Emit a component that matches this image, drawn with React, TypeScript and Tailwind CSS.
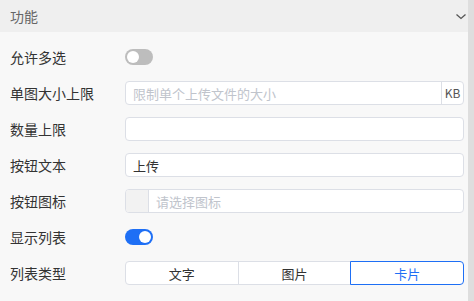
import React, { useState } from 'react';

const font = { fontFamily: '"Noto Sans CJK SC", "Noto Sans", sans-serif' };

const Toggle: React.FC<{ on: boolean; onChange: () => void }> = ({ on, onChange }) => (
  <button
    type="button"
    onClick={onChange}
    className={`relative h-[16px] w-[28px] rounded-full ${on ? 'bg-[#1e6ff5]' : 'bg-[#bdbdbd]'}`}
  >
    <span
      className={`absolute top-[2px] h-[12px] w-[12px] rounded-full bg-white ${on ? 'left-[14px]' : 'left-[2px]'}`}
    />
  </button>
);

const Row: React.FC<{ label: string; children: React.ReactNode }> = ({ label, children }) => (
  <div className="flex h-9 items-center">
    <div className="w-[115px] shrink-0 text-[14px] leading-none text-[#333]">{label}</div>
    <div className="flex flex-1 items-center">{children}</div>
  </div>
);

const App: React.FC = () => {
  const [multi, setMulti] = useState(false);
  const [showList, setShowList] = useState(true);
  const [listType, setListType] = useState('卡片');
  const [btnText, setBtnText] = useState('上传');

  const inputCls =
    'h-[24px] w-full rounded-[4px] border border-[#dcdfe6] bg-white px-[7px] text-[13px] text-[#333] outline-none placeholder:text-[#c0c4cc]';

  return (
    <div className="flex h-[301px] w-[474px] bg-[#f8f8f8]" style={font}>
      <div className="flex-1">
        <div className="flex h-8 items-center justify-between bg-[#efefef] pl-[10px] pr-[1px]">
          <span className="text-[14px] text-[#666]">功能</span>
          <svg width="12" height="12" viewBox="0 0 12 12" fill="none">
            <path d="M1.5 4.5l4.5 4 4.5-4" stroke="#555" strokeWidth="1.3" />
          </svg>
        </div>
        <div className="pl-[10px] pr-[4px] pt-[7px]">
          <Row label="允许多选">
            <Toggle on={multi} onChange={() => setMulti(!multi)} />
          </Row>
          <Row label="单图大小上限">
            <div className="flex h-[24px] w-full rounded-[4px] border border-[#dcdfe6] bg-white">
              <input
                className="h-full flex-1 bg-transparent px-[7px] text-[13px] outline-none placeholder:text-[#c0c4cc]"
                placeholder="限制单个上传文件的大小"
              />
              <span className="flex w-[22px] items-center justify-center border-l border-[#dcdfe6] text-[12px] text-[#555]">
                KB
              </span>
            </div>
          </Row>
          <Row label="数量上限">
            <input className={inputCls} />
          </Row>
          <Row label="按钮文本">
            <input className={inputCls} value={btnText} onChange={(e) => setBtnText(e.target.value)} />
          </Row>
          <Row label="按钮图标">
            <div className="flex h-[24px] w-full overflow-hidden rounded-[4px] border border-[#dcdfe6] bg-white">
              <span className="w-[23px] border-r border-[#dcdfe6] bg-[#f2f2f2]" />
              <input
                className="h-full flex-1 bg-transparent px-[7px] text-[13px] outline-none placeholder:text-[#c0c4cc]"
                placeholder="请选择图标"
              />
            </div>
          </Row>
          <Row label="显示列表">
            <Toggle on={showList} onChange={() => setShowList(!showList)} />
          </Row>
          <Row label="列表类型">
            <div className="flex h-[24px] w-full">
              {['文字', '图片', '卡片'].map((t, i) => {
                const active = listType === t;
                return (
                  <button
                    key={t}
                    type="button"
                    onClick={() => setListType(t)}
                    className={`flex-1 border bg-white text-[13px] leading-none ${
                      active ? 'relative z-10 border-[#1e6ff5] text-[#1e6ff5]' : 'border-[#dcdfe6] text-[#333]'
                    } ${i === 0 ? 'rounded-l-[4px]' : '-ml-px'} ${i === 2 ? 'rounded-r-[4px]' : ''}`}
                  >
                    {t}
                  </button>
                );
              })}
            </div>
          </Row>
        </div>
      </div>
      <div className="w-[6px] bg-[#dedede]" />
    </div>
  );
};

export default App;
